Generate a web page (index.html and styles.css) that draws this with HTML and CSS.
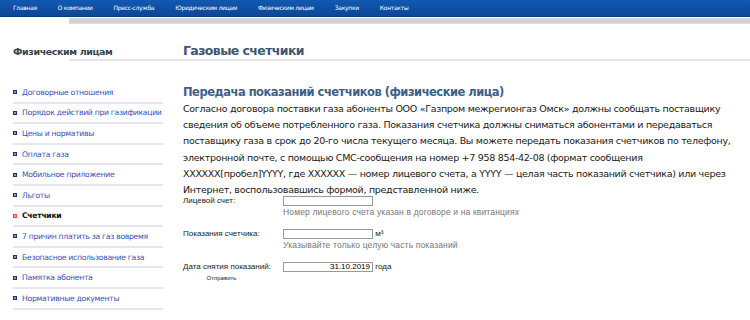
FILE: index.html
```html
<html>

<head>
    <meta charset="utf-8">
    <link rel="stylesheet" href="styles.css">
</head>

<body>
    <div class="topnav">
        <a href="#">Главная</a>
        <a href="#">О компании</a>
        <a href="#">Пресс-служба</a>
        <a href="#">Юридическим лицам</a>
        <a href="#">Физическим лицам</a>
        <a href="#">Закупки</a>
        <a href="#">Контакты</a>
    </div>
    <div class="stripe"><div class="stripe-bar"></div></div>

    <div class="heads">
        <div class="side-title">Физическим лицам</div>
        <h1 class="page-title">Газовые счетчики</h1>
    </div>
    <div class="rule"></div>

    <div class="page">
        <ul class="side-menu">
            <li><a href="#">Договорные отношения</a></li>
            <li><a href="#">Порядок действий при газификации</a></li>
            <li><a href="#">Цены и нормативы</a></li>
            <li><a href="#">Оплата газа</a></li>
            <li><a href="#">Мобильное приложение</a></li>
            <li><a href="#">Льготы</a></li>
            <li class="active"><a href="#">Счетчики</a></li>
            <li><a href="#">7 причин платить за газ вовремя</a></li>
            <li><a href="#">Безопасное использование газа</a></li>
            <li><a href="#">Памятка абонента</a></li>
            <li><a href="#">Нормативные документы</a></li>
        </ul>

        <div class="content">
            <h3>Передача показаний счетчиков (физические лица)</h3>
            <p class="intro">Согласно договора поставки газа абоненты ООО «Газпром межрегионгаз Омск» должны сообщать поставщику сведения об объеме потребленного газа. Показания счетчика должны сниматься абонентами и передаваться поставщику газа в срок до 20-го числа текущего месяца. Вы можете передать показания счетчиков по телефону, электронной почте, с помощью СМС-сообщения на номер +7&nbsp;958&nbsp;854-42-08 (формат сообщения XXXXXX[пробел]YYYY, где XXXXXX — номер лицевого счета, а YYYY — целая часть показаний счетчика) или через Интернет, воспользовавшись формой, представленной ниже.</p>

            <form class="meter-form">
                <div class="row">
                    <span class="label">Лицевой счет:</span>
                    <div class="field">
                        <input type="text" class="box">
                        <div class="hint">Номер лицевого счета указан в договоре и на квитанциях</div>
                    </div>
                </div>
                <div class="row">
                    <span class="label">Показания счетчика:</span>
                    <div class="field">
                        <input type="text" class="box"> <span class="unit">м³</span>
                        <div class="hint">Указывайте только целую часть показаний</div>
                    </div>
                </div>
                <div class="row">
                    <span class="label">Дата снятия показаний:</span>
                    <div class="field">
                        <input type="text" class="box date" value="31.10.2019"> <span class="unit">года</span>
                    </div>
                </div>
                <div class="send"><button type="button">Отправить</button></div>
            </form>
        </div>
    </div>
</body>

</html>
```

FILE: styles.css
```css
body {
    margin: 0;
    background: #fff;
    font-family: 'DejaVu Sans', Verdana, sans-serif;
    color: #222;
}
.topnav {
    height: 16px;
    background: linear-gradient(#1259b2, #0b4797);
    border-bottom: 1px solid #083a7e;
    padding-left: 13px;
    display: flex;
    gap: 21px;
}
.topnav a {
    color: #fff;
    text-decoration: none;
    font-size: 6px;
    letter-spacing: -0.3px;
    line-height: 16px;
}
.stripe {
    padding-top: 1px;
    height: 6px;
    display: flex;
}
.stripe-bar {
    margin-left: 69px;
    flex: 1;
    background: linear-gradient(#d4d4d8, #cfcfd3 80%, #f4e8e0);
}
.heads {
    display: flex;
    align-items: baseline;
    height: 35px;
}
.side-title {
    width: 183px;
    padding-left: 13px;
    box-sizing: border-box;
    font-size: 9.5px;
    letter-spacing: -0.4px;
    font-weight: bold;
    color: #39434f;
    margin-top: 22px;
}
.page-title {
    margin: 0;
    font-size: 12.5px;
    letter-spacing: -0.6px;
    font-weight: bold;
    color: #3f5673;
}
.rule {
    margin-left: 69px;
    height: 2px;
    background: #e6e6e6;
}
.page {
    display: flex;
    padding-top: 22px;
}
.side-menu {
    list-style: none;
    margin: 0 0 0 13px;
    padding: 0;
    width: 150px;
}
.side-menu li {
    height: 18.6px;
    border-bottom: 2px solid #e6e6ee;
    display: flex;
    align-items: center;
    font-size: 7.7px;
    letter-spacing: -0.3px;
}
.side-menu li::before {
    content: "";
    width: 2px;
    height: 2px;
    border: 1.5px solid #1d2f6e;
    background: #8a9ad0;
    margin-right: 5px;
}
.side-menu a {
    color: #3553b8;
    text-decoration: none;
}
.side-menu li.active::before {
    border-color: #e0523a;
    background: #f3a090;
}
.side-menu li.active a {
    color: #111;
    font-weight: bold;
}
.content {
    margin-left: 20px;
    width: 562px;
}
.content h3 {
    margin: 0;
    font-size: 11.5px;
    letter-spacing: -0.5px;
    color: #3d5f88;
    line-height: 18px;
}
.intro {
    margin: 0;
    font-size: 9.5px;
    letter-spacing: -0.3px;
    line-height: 16.2px;
    color: #1a1a1a;
}
.meter-form {
    margin-top: -2.5px;
    font-family: 'Liberation Sans', Arial, sans-serif;
    font-size: 8px;
    color: #222;
}
.row {
    display: flex;
    height: 33px;
}
.label {
    width: 100px;
    line-height: 10px;
}
.box {
    width: 90px;
    height: 10px;
    border: 1px solid #9a9a9a;
    padding: 0 2px;
    margin: 0;
    font-size: 8px;
    font-family: 'Liberation Sans', Arial, sans-serif;
    box-sizing: border-box;
    vertical-align: top;
}
.box.date {
    text-align: right;
    color: #000;
}
.unit {
    font-size: 8px;
    line-height: 10px;
}
.hint {
    color: #777;
    font-size: 8.5px;
    letter-spacing: 0.15px;
    margin-top: 1px;
}
.send {
    width: 77px;
    text-align: center;
    margin-top: -20px;
}
.send button {
    border: 0;
    background: none;
    font-family: 'Liberation Sans', Arial, sans-serif;
    font-size: 6px;
    color: #222;
    padding: 0;
}
```
